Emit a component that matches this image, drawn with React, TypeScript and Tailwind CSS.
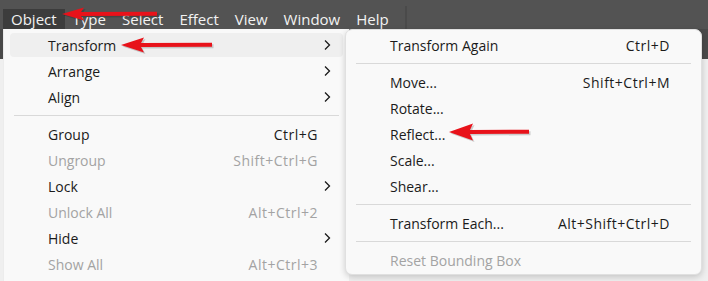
import { FC } from 'react';

type Item =
  | { sep: true }
  | { sep?: false; label: string; shortcut?: string; sub?: boolean; disabled?: boolean; active?: boolean };

const mainItems: Item[] = [
  { label: 'Transform', sub: true, active: true },
  { label: 'Arrange', sub: true },
  { label: 'Align', sub: true },
  { sep: true },
  { label: 'Group', shortcut: 'Ctrl+G' },
  { label: 'Ungroup', shortcut: 'Shift+Ctrl+G', disabled: true },
  { label: 'Lock', sub: true },
  { label: 'Unlock All', shortcut: 'Alt+Ctrl+2', disabled: true },
  { label: 'Hide', sub: true },
  { label: 'Show All', shortcut: 'Alt+Ctrl+3', disabled: true },
];

const subItems: Item[] = [
  { label: 'Transform Again', shortcut: 'Ctrl+D' },
  { sep: true },
  { label: 'Move...', shortcut: 'Shift+Ctrl+M' },
  { label: 'Rotate...' },
  { label: 'Reflect...' },
  { label: 'Scale...' },
  { label: 'Shear...' },
  { sep: true },
  { label: 'Transform Each...', shortcut: 'Alt+Shift+Ctrl+D' },
  { sep: true },
  { label: 'Reset Bounding Box', disabled: true },
];

const menuBar = ['Object', 'Type', 'Select', 'Effect', 'View', 'Window', 'Help'];

const Chevron: FC = () => (
  <svg width="8" height="12" viewBox="0 0 8 12" className="shrink-0">
    <path d="M2 1.5 L6.5 6 L2 10.5" fill="none" stroke="#1a1a1a" strokeWidth="1.3" />
  </svg>
);

const MenuList: FC<{ items: Item[] }> = ({ items }) => (
  <>
    {items.map((it, i) =>
      it.sep ? (
        <div key={i} className="pt-[5px] pb-[5px] px-[10px]">
          <div className="h-px bg-[#d9d9d9]" />
        </div>
      ) : (
        <div key={i} className="py-px px-[6px]">
          <div
            className={`flex items-center h-[24px] rounded-[4px] pl-[38px] ${it.active ? 'bg-[#efefef]' : ''} ${
              it.sub ? 'pr-[12px]' : 'pr-[25px]'
            } ${it.disabled ? 'text-[#a3a3a3]' : 'text-[#1b1b1b]'}`}
          >
            <span className="flex-1">{it.label}</span>
            {it.shortcut && <span className="tracking-[0.5px]">{it.shortcut}</span>}
            {it.sub && <Chevron />}
          </div>
        </div>
      )
    )}
  </>
);

const Arrow: FC<{ tipX: number; y: number; backX: number; endX: number; half: number }> = ({ tipX, y, backX, endX, half }) => {
  const notch = backX - 3;
  const d = `M${tipX} ${y} L${backX} ${y - half} L${notch} ${y - 2} L${endX} ${y - 2.2} L${endX} ${y + 1.8} L${notch} ${y + 2} L${backX} ${y + half} Z`;
  return (
    <>
      <path d={d} fill="#000" opacity="0.18" transform="translate(1.5 1.5)" />
      <path d={d} fill="#e8121a" />
    </>
  );
};

export default function App() {
  return (
    <div
      className="relative w-[708px] h-[281px] overflow-hidden bg-[#535353] text-[14px]"
      style={{ fontFamily: '"Open Sans", "Noto Sans", sans-serif' }}
    >
      {/* menu bar */}
      <div className="flex items-end h-[29px] pl-[3px] text-[15px]">
        {menuBar.map((m, i) => (
          <div
            key={m}
            className={`h-[20px] flex items-center px-[8px] text-[#f2f2f2] leading-none ${i === 0 ? 'bg-[#3c3c3c]' : ''}`}
          >
            {m}
          </div>
        ))}
        <div className="ml-[8px] h-[23px] w-[2px] bg-[#4a4a4a]" />
      </div>

      {/* workspace behind */}
      <div className="h-[252px] flex flex-col">
        <div className="h-[30px] bg-[#4a4a4a]" />
        <div className="flex-1 bg-[#efefef]" />
      </div>

      {/* main dropdown */}
      <div className="absolute left-[3px] top-[29px] w-[346px] h-[270px] bg-[#f9f9f9] border-l border-[#ececec] pt-[3px]">
        <MenuList items={mainItems} />
      </div>

      {/* submenu */}
      <div className="absolute left-[345px] top-[29px] w-[357px] bg-[#f9f9f9] rounded-[7px] border border-[#e0e0e0] shadow-[0_2px_6px_rgba(0,0,0,0.18)] pt-[2px] pb-[1px]">
        <MenuList items={subItems} />
      </div>

      {/* annotation arrows */}
      <svg className="absolute left-0 top-0" width="708" height="281">
        <Arrow tipX={62} y={14} backX={84} endX={157} half={6.5} />
        <Arrow tipX={121} y={45} backX={144} endX={212} half={7.5} />
        <Arrow tipX={449} y={132} backX={473} endX={529} half={8.5} />
      </svg>
    </div>
  );
}
